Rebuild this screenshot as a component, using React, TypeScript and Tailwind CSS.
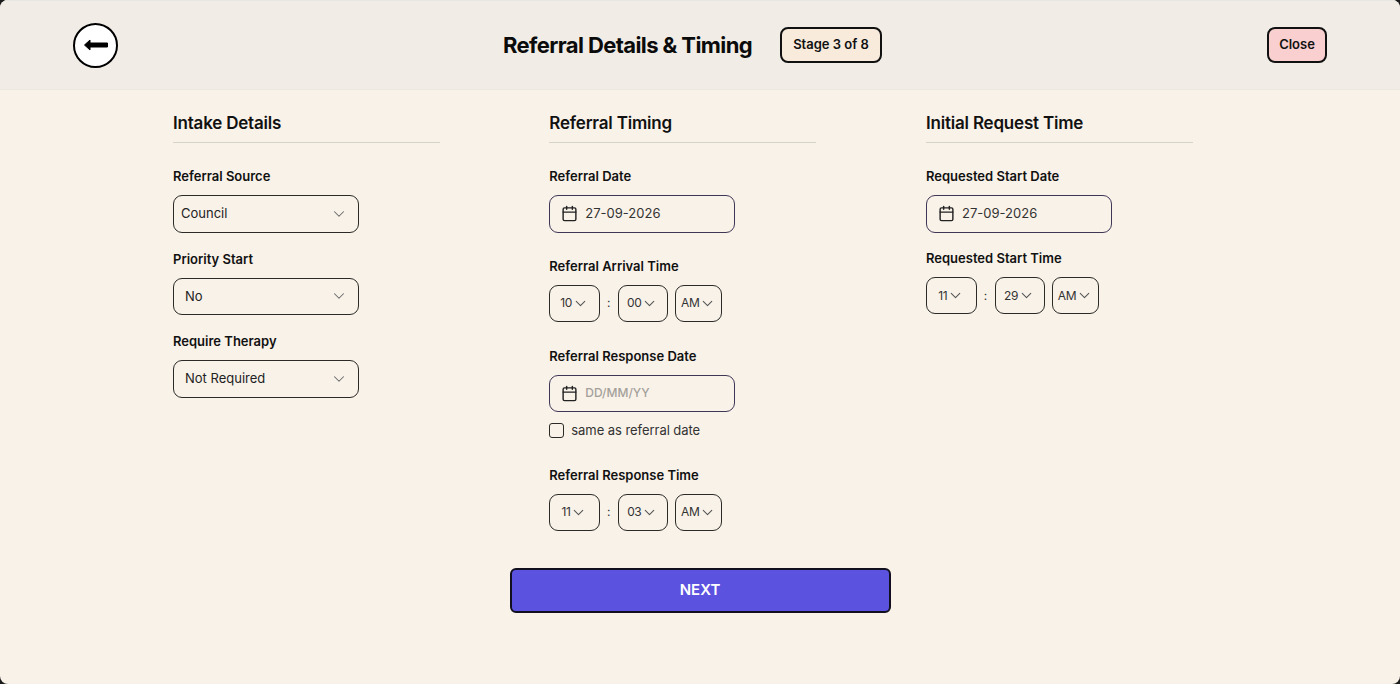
import React from 'react';
import { ChevronDown, Calendar } from 'lucide-react';

const Label: React.FC<{ children: React.ReactNode }> = ({ children }) => (
  <div className="text-[13px] leading-[18px] font-semibold text-[#111]">{children}</div>
);

const Heading: React.FC<{ children: React.ReactNode }> = ({ children }) => (
  <div className="h-[31px] border-b border-[#d5d3c9] text-[17px] leading-[22px] font-semibold tracking-[-0.2px] text-[#111]">{children}</div>
);

const Select: React.FC<{ value: string; pad?: string }> = ({ value, pad = 'pl-[11px]' }) => (
  <div className={`mt-[10px] flex h-[37.5px] w-[186px] items-center justify-between rounded-[9px] border border-[#2b2a27] pr-[10px] text-[13px] text-[#222] ${pad}`}>
    <span>{value}</span>
    <ChevronDown size={18} strokeWidth={1.4} className="text-[#666]" />
  </div>
);

const DateField: React.FC<{ value?: string }> = ({ value }) => (
  <div className="mt-[10px] flex h-[37.5px] w-[186px] items-center gap-[7px] rounded-[9px] border border-[#3f3755] pl-[11px]">
    <Calendar size={17} strokeWidth={2} className="text-[#222]" />
    {value ? (
      <span className="text-[13px] text-[#333]">{value}</span>
    ) : (
      <span className="text-[12px] font-medium text-[#a3a09a]">DD/MM/YY</span>
    )}
  </div>
);

const TimeBox: React.FC<{ value: string; w: string }> = ({ value, w }) => (
  <div className={`flex h-[37px] items-center justify-center rounded-[9px] border border-[#2b2a27] text-[12px] tracking-[-0.4px] text-[#333] ${w}`}>
    <span>{value}</span>
    <ChevronDown size={17} strokeWidth={1.5} className="text-[#555]" />
  </div>
);

const TimeRow: React.FC<{ h: string; m: string; ap: string }> = ({ h, m, ap }) => (
  <div className="mt-[10px] flex items-center">
    <TimeBox value={h} w="w-[50.5px]" />
    <span className="w-[18px] text-center text-[12px] text-[#333]">:</span>
    <TimeBox value={m} w="w-[50px]" />
    <div className="w-[7.5px]" />
    <TimeBox value={ap} w="w-[47px]" />
  </div>
);

export default function App() {
  return (
    <div className="h-[684px] w-[1400px] bg-[#1c1c1c] font-['Inter',sans-serif]">
      <div className="flex h-full flex-col overflow-hidden rounded-[8px] bg-[#f9f2e9]">
        <header className="flex h-[90px] shrink-0 items-center justify-between border-t border-b border-t-[#e9e7e3] border-b-[#ece8e0] bg-[#f1ede6] px-[73px]">
          <button className="flex h-[45px] w-[45px] items-center justify-center rounded-full border-2 border-black bg-white">
            <svg width="24" height="12" viewBox="0 0 24 12" className="text-black">
              <polygon points="0.5,6 6,1 6,4 23.5,4 23.5,8 6,8 6,11" fill="currentColor" stroke="currentColor" strokeWidth="1" strokeLinejoin="round" />
            </svg>
          </button>
          <div className="flex items-center gap-[28px]">
            <h1 className="text-[22px] font-bold tracking-[-0.6px] text-[#0b0b0b]">Referral Details &amp; Timing</h1>
            <div className="flex h-[36px] w-[102px] items-center justify-center rounded-[8px] border-2 border-[#111] bg-[#f8ebdc] text-[13px] font-semibold text-[#111]">Stage 3 of 8</div>
          </div>
          <button className="flex h-[36px] w-[60px] items-center justify-center rounded-[8px] border-2 border-[#111] bg-[#f9cfcf] text-[13px] font-semibold text-[#111]">Close</button>
        </header>

        <main className="flex flex-col pl-[173px] pt-[22px]">
          <div className="flex">
            <section className="w-[267px]">
              <Heading>Intake Details</Heading>
              <div className="mt-[24px]"><Label>Referral Source</Label></div>
              <Select value="Council" pad="pl-[7px]" />
              <div className="mt-[17px]"><Label>Priority Start</Label></div>
              <Select value="No" />
              <div className="mt-[17px]"><Label>Require Therapy</Label></div>
              <Select value="Not Required" />
            </section>

            <section className="ml-[109.25px] w-[267px]">
              <Heading>Referral Timing</Heading>
              <div className="mt-[24px]"><Label>Referral Date</Label></div>
              <DateField value="27-09-2026" />
              <div className="mt-[24px]"><Label>Referral Arrival Time</Label></div>
              <TimeRow h="10" m="00" ap="AM" />
              <div className="mt-[25px]"><Label>Referral Response Date</Label></div>
              <DateField />
              <div className="mt-[11px] flex h-[15px] items-center gap-[7px]">
                <div className="h-[15px] w-[15px] rounded-[3px] border border-[#2b2a27]" />
                <span className="text-[13px] tracking-[-0.05px] text-[#333]">same as referral date</span>
              </div>
              <div className="mt-[27.5px]"><Label>Referral Response Time</Label></div>
              <TimeRow h="11" m="03" ap="AM" />
            </section>

            <section className="ml-[109.75px] w-[267px]">
              <Heading>Initial Request Time</Heading>
              <div className="mt-[24px]"><Label>Requested Start Date</Label></div>
              <DateField value="27-09-2026" />
              <div className="mt-[16.5px]"><Label>Requested Start Time</Label></div>
              <TimeRow h="11" m="29" ap="AM" />
            </section>
          </div>
        </main>

        <div className="mt-[37px] flex justify-center">
          <button className="h-[45px] w-[381px] rounded-[6px] border-2 border-[#12101f] bg-[#5c52e0] text-[15px] font-semibold text-white">NEXT</button>
        </div>
      </div>
    </div>
  );
}
